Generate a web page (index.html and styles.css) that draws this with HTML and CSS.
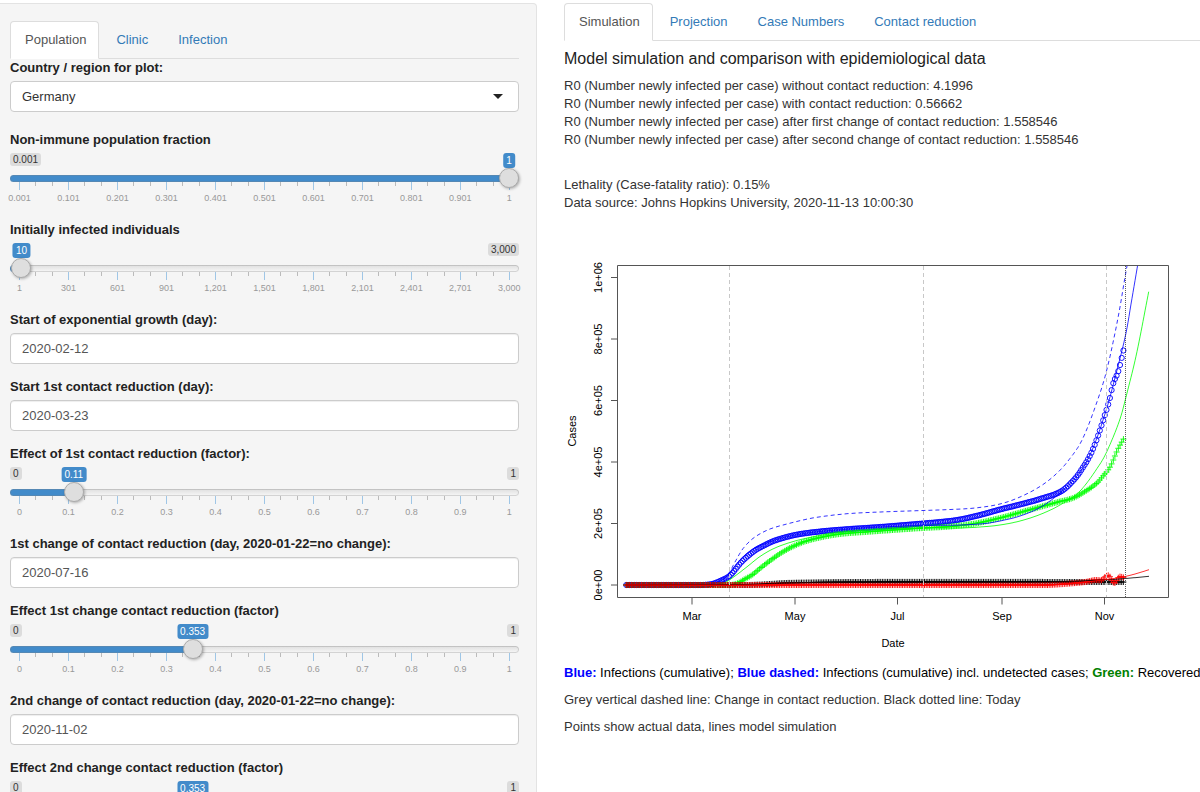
FILE: index.html
```html
<!DOCTYPE html>
<html lang="en">
<head>
<meta charset="utf-8">
<title>Epidemic simulation</title>
<link rel="stylesheet" href="styles.css">
</head>
<body>
<div class="layout">
  <form class="sidebar">
    <nav class="tabs">
      <a class="tab active" href="#population">Population</a>
      <a class="tab" href="#clinic">Clinic</a>
      <a class="tab" href="#infection">Infection</a>
    </nav>

    <div class="field field-select">
      <label for="country">Country / region for plot:</label>
      <div class="select-box">
        <select id="country"><option>Germany</option></select>
      </div>
    </div>

    <div class="field">
      <label for="fraction">Non-immune population fraction</label>
      <div class="slider" style="--pos: 1" data-ticks="0.001 0.101 0.201 0.301 0.401 0.501 0.601 0.701 0.801 0.901 1">
        <span class="limit min">0.001</span>
        <output class="bubble" for="fraction">1</output>
        <input type="range" id="fraction" min="0.001" max="1" step="0.001" value="1">
        <div class="scale"></div>
      </div>
    </div>

    <div class="field">
      <label for="initial">Initially infected individuals</label>
      <div class="slider" style="--pos: 0.003" data-ticks="1 301 601 901 1,201 1,501 1,801 2,101 2,401 2,701 3,000">
        <span class="limit max">3,000</span>
        <output class="bubble" for="initial">10</output>
        <input type="range" id="initial" min="1" max="3000" value="10">
        <div class="scale"></div>
      </div>
    </div>

    <div class="field">
      <label for="growth">Start of exponential growth (day):</label>
      <input type="text" class="text" id="growth" value="2020-02-12">
    </div>

    <div class="field">
      <label for="start1">Start 1st contact reduction (day):</label>
      <input type="text" class="text" id="start1" value="2020-03-23">
    </div>

    <div class="field">
      <label for="effect1">Effect of 1st contact reduction (factor):</label>
      <div class="slider" style="--pos: 0.11" data-ticks="0 0.1 0.2 0.3 0.4 0.5 0.6 0.7 0.8 0.9 1">
        <span class="limit min">0</span><span class="limit max">1</span>
        <output class="bubble" for="effect1">0.11</output>
        <input type="range" id="effect1" min="0" max="1" step="0.001" value="0.11">
        <div class="scale"></div>
      </div>
    </div>

    <div class="field">
      <label for="change1">1st change of contact reduction (day, 2020-01-22=no change):</label>
      <input type="text" class="text" id="change1" value="2020-07-16">
    </div>

    <div class="field">
      <label for="effect2">Effect 1st change contact reduction (factor)</label>
      <div class="slider" style="--pos: 0.353" data-ticks="0 0.1 0.2 0.3 0.4 0.5 0.6 0.7 0.8 0.9 1">
        <span class="limit min">0</span><span class="limit max">1</span>
        <output class="bubble" for="effect2">0.353</output>
        <input type="range" id="effect2" min="0" max="1" step="0.001" value="0.353">
        <div class="scale"></div>
      </div>
    </div>

    <div class="field">
      <label for="change2">2nd change of contact reduction (day, 2020-01-22=no change):</label>
      <input type="text" class="text" id="change2" value="2020-11-02">
    </div>

    <div class="field">
      <label for="effect3">Effect 2nd change contact reduction (factor)</label>
      <div class="slider" style="--pos: 0.353" data-ticks="0 0.1 0.2 0.3 0.4 0.5 0.6 0.7 0.8 0.9 1">
        <span class="limit min">0</span><span class="limit max">1</span>
        <output class="bubble" for="effect3">0.353</output>
        <input type="range" id="effect3" min="0" max="1" step="0.001" value="0.353">
        <div class="scale"></div>
      </div>
    </div>
  </form>

  <main class="main">
    <nav class="tabs">
      <a class="tab active" href="#simulation">Simulation</a>
      <a class="tab" href="#projection">Projection</a>
      <a class="tab" href="#cases">Case Numbers</a>
      <a class="tab" href="#contact">Contact reduction</a>
    </nav>
    <h4>Model simulation and comparison with epidemiological data</h4>
    <p>R0 (Number newly infected per case) without contact reduction: 4.1996<br>
    R0 (Number newly infected per case) with contact reduction: 0.56662<br>
    R0 (Number newly infected per case) after first change of contact reduction: 1.558546<br>
    R0 (Number newly infected per case) after second change of contact reduction: 1.558546<br><br></p>
    <p>Lethality (Case-fatality ratio): 0.15%<br>
    Data source: Johns Hopkins University, 2020-11-13 10:00:30</p>
    <svg class="chart" id="chart" viewBox="564 221 636 434" role="img" aria-label="Cases by date"></svg>
    <p class="legend"><b class="blue">Blue:</b> Infections (cumulative); <b class="blue">Blue dashed:</b> Infections (cumulative) incl. undetected cases; <b class="green">Green:</b> Recovered</p>
    <p>Grey vertical dashed line: Change in contact reduction. Black dotted line: Today</p>
    <p>Points show actual data, lines model simulation</p>
  </main>
</div>
<script src="script.js"></script>
</body>
</html>
```
FILE: styles.css
```css
* { box-sizing: border-box; }

body {
  margin: 0;
  height: 100vh;
  overflow: hidden;
  background: #fff;
  color: #333;
  font-family: "Liberation Sans", Arial, sans-serif;
  font-size: 13px;
  line-height: 18px;
}

.layout {
  display: flex;
  gap: 27px;
  padding-top: 3px;
}

.sidebar {
  flex: none;
  width: 44.75%;
  padding: 17px 17px 17px 10px;
  background: #f5f5f5;
  border: 1px solid #e3e3e3;
  border-left: 0;
  border-radius: 0 4px 4px 0;
}

.main {
  flex: 1;
  min-width: 0;
}

.tabs {
  display: flex;
  gap: 2px;
  border-bottom: 1px solid #ddd;
}

.tab {
  padding: 9px 12px 9px 14px;
  margin-bottom: -1px;
  border: 1px solid transparent;
  border-radius: 4px 4px 0 0;
  color: #337ab7;
  text-decoration: none;
}

.tab.active {
  color: #555;
  background: #fff;
  border-color: #ddd #ddd transparent;
}

.field { margin-bottom: 14px; }
.field-select { margin-bottom: 19px; }

label {
  display: block;
  margin-bottom: 4px;
  color: #222;
  font-weight: bold;
}

.text,
select {
  display: block;
  width: 100%;
  height: 31px;
  padding: 0 11px;
  border: 1px solid #ccc;
  border-radius: 4px;
  background: #fff;
  color: #555;
  font: inherit;
  appearance: none;
}

.text { box-shadow: inset 0 1px 1px rgba(0, 0, 0, 0.07); }

select { color: #333; }

.select-box { position: relative; }

.select-box::after {
  content: "";
  position: absolute;
  right: 16px;
  top: 13px;
  border: 5px solid transparent;
  border-top-color: #222;
  border-bottom: 0;
  pointer-events: none;
}

.slider {
  position: relative;
  height: 54px;
  padding-top: 15px;
}

.limit,
.bubble {
  position: absolute;
  top: 0;
  padding: 0 3px;
  border-radius: 3px;
  font-size: 10px;
}

.limit {
  line-height: 13px;
  background: #dcdcdc;
  color: #333;
}

.min { left: 0; }
.max { right: 0; }

.bubble {
  left: calc(10px + var(--pos) * (100% - 20px));
  transform: translateX(-50%);
  line-height: 15px;
  background: #428bca;
  color: #fff;
}

input[type="range"] {
  display: block;
  position: relative;
  z-index: 1;
  width: 100%;
  height: 20px;
  margin: 0;
  appearance: none;
  background: transparent;
}

input[type="range"]::-webkit-slider-runnable-track {
  height: 7px;
  border-radius: 4px;
  background:
    linear-gradient(#428bca, #428bca) 0 0 / calc(10px + var(--pos) * (100% - 20px)) 100% no-repeat,
    linear-gradient(#dedede, #f8f8f8);
  box-shadow: inset 0 0 0 1px rgba(130, 130, 130, 0.3);
}

input[type="range"]::-webkit-slider-thumb {
  appearance: none;
  width: 20px;
  height: 20px;
  margin-top: -7px;
  border: 1px solid #ababab;
  border-radius: 50%;
  background: #dedede;
  box-shadow: 1px 1px 3px rgba(0, 0, 0, 0.3);
}

.scale {
  display: flex;
  justify-content: space-between;
  height: 7px;
  margin: -6px 9px 0;
}

.tick {
  display: flex;
  justify-content: center;
  width: 1px;
  height: 4px;
  background: #bbb;
}

.tick.major {
  height: 8px;
  background: #9fc6e6;
}

.tick-label {
  margin-top: 12px;
  font-size: 9px;
  line-height: 9px;
  color: #999;
}

h4 {
  margin: 8px 0 9px;
  color: #222;
  font-size: 16px;
  line-height: 19px;
  font-weight: normal;
}

p { margin: 0 0 9px; }

.chart {
  display: block;
  width: 100%;
  margin-bottom: 9px;
  font-size: 11px;
}

.chart .axis { stroke: #555; fill: none; }
.chart .change { stroke: #c8c8c8; stroke-dasharray: 4 3; }
.chart .today { stroke: #333; stroke-dasharray: 1 1; stroke-opacity: 0.8; }
.chart .label { fill: #000; text-anchor: middle; }
.chart .curve { fill: none; stroke-opacity: 0.8; }
.chart .mark { fill: none; stroke-opacity: 0.9; }
.chart .dashed { stroke-dasharray: 4 3; }
.chart .c-blue { stroke: #00f; }
.chart .c-green { stroke: #0f0; }
.chart .c-black { stroke: #000; }
.chart .c-red { stroke: #f00; }

.legend {
  color: #000;
  white-space: nowrap;
}

.blue { color: #00f; }
.green { color: green; }
```
FILE: script.js
```js
// Slider scales: a labelled major tick, then two minor ones before the next.
document.querySelectorAll('.slider').forEach(function (slider) {
  var scale = slider.querySelector('.scale');
  slider.dataset.ticks.split(' ').forEach(function (text, i) {
    if (i > 0) scale.insertAdjacentHTML('beforeend', '<span class="tick"></span><span class="tick"></span>');
    scale.insertAdjacentHTML('beforeend', '<span class="tick major"><span class="tick-label">' + text + '</span></span>');
  });
});

// Smooth cubic interpolation through [x, y] knots, slopes from the neighbouring knots.
function interpolate(knots) {
  var n = knots.length, m = [];
  for (var i = 0; i < n; i++) {
    var a = knots[Math.max(i - 1, 0)], b = knots[Math.min(i + 1, n - 1)];
    m.push((b[1] - a[1]) / (b[0] - a[0]));
  }
  m[0] = 0;
  m[1] = 0;
  return function (x) {
    var k = 0;
    while (k < n - 2 && x > knots[k + 1][0]) k++;
    var h = knots[k + 1][0] - knots[k][0], t = (x - knots[k][0]) / h;
    var t2 = t * t, t3 = t2 * t;
    return (2 * t3 - 3 * t2 + 1) * knots[k][1] + (t3 - 2 * t2 + t) * h * m[k] +
      (3 * t2 - 2 * t3) * knots[k + 1][1] + (t3 - t2) * h * m[k + 1];
  };
}

var DAY = 1.685, FIRST = 626.3, LAST = 1123.6;
var parts = [];

function path(cls, d) { parts.push('<path class="' + cls + '" d="' + d + '"/>'); }

function curve(cls, knots) {
  var f = interpolate(knots), end = knots[knots.length - 1][0], d = '';
  for (var x = knots[0][0]; x < end; x += 1) d += (d ? 'L' : 'M') + x.toFixed(1) + ' ' + f(x).toFixed(1);
  path('curve ' + cls, d + 'L' + end + ' ' + f(end).toFixed(1));
}

function marks(cls, knots, shape) {
  var f = interpolate(knots), d = '';
  for (var x = FIRST; x <= LAST; x += DAY) {
    if (x >= knots[0][0]) d += 'M' + x.toFixed(1) + ' ' + f(x).toFixed(1) + shape;
  }
  path('mark ' + cls, d);
}

var CIRCLE = 'm-2.6 0a2.6 2.6 0 1 0 5.2 0a2.6 2.6 0 1 0 -5.2 0';
var PLUS = 'm-3 0h6m-3 -3v6';

// Frame and axes
path('axis', 'M617.5 265.5H1168.5V597.5H617.5Z');
[['Mar', 692], ['May', 795], ['Jul', 897.5], ['Sep', 1002], ['Nov', 1104.5]].forEach(function (t) {
  path('axis', 'M' + t[1] + ' 598v6.5');
  parts.push('<text class="label" x="' + t[1] + '" y="620">' + t[0] + '</text>');
});
[['0e+00', 585], ['2e+05', 523.5], ['4e+05', 462], ['6e+05', 400.5], ['8e+05', 339], ['1e+06', 277.5]].forEach(function (t) {
  path('axis', 'M611 ' + t[1] + 'h6.5');
  parts.push('<text class="label" transform="translate(602 ' + t[1] + ') rotate(-90)">' + t[0] + '</text>');
});
parts.push('<text class="label" x="893" y="647">Date</text>');
parts.push('<text class="label" transform="translate(576 431) rotate(-90)">Cases</text>');

// Reported cases
marks('c-blue', [[626, 585], [700, 585], [712, 584], [720, 581], [730, 575.5], [741, 562.5], [748, 556], [755, 550.5], [763, 546], [775, 540.5], [795, 535], [820, 531.5], [850, 529], [880, 527], [923, 523.5], [945, 521.5], [960, 519.5], [980, 515], [1000, 509.5], [1020, 504.5], [1040, 499], [1060, 492], [1070, 484], [1080, 472], [1093, 449], [1106.5, 410], [1110, 397.6], [1113, 384], [1117.7, 373], [1120, 365], [1123.5, 350]], CIRCLE);
marks('c-green', [[626, 585], [730, 585], [737, 583.5], [745, 579], [752, 575], [763, 566], [778, 555], [787, 549.5], [795, 545.5], [805, 541.5], [820, 537.5], [840, 534], [865, 532], [900, 529.5], [923, 528], [950, 526.5], [975, 523.5], [1000, 518], [1020, 512.5], [1040, 507], [1058, 502], [1073, 498], [1085, 491.5], [1097, 483], [1103, 476], [1110, 467], [1118, 449], [1124, 438]], PLUS);

// Model
curve('c-blue', [[626, 585], [700, 585], [715, 583], [722, 580], [729, 574], [737, 563.5], [745, 555], [754, 548.5], [763, 544.5], [775, 540], [795, 535], [820, 531.5], [850, 529], [880, 527], [923, 525.5], [960, 525], [985, 523.5], [1000, 521], [1020, 516], [1040, 507.5], [1060, 493], [1080, 472], [1093, 448], [1106.5, 409], [1117, 370], [1126, 333], [1131.7, 300], [1137.5, 266]]);
curve('c-blue dashed', [[626, 585], [700, 585], [715, 582.5], [722, 580], [729, 573], [735, 562], [742, 550], [750, 541], [758, 535], [770, 529], [785, 524.5], [810, 518.5], [830, 515.5], [850, 513.5], [880, 512], [923, 510.5], [950, 509.5], [975, 508], [1000, 504], [1020, 497], [1040, 486.5], [1055, 475], [1068, 461], [1083, 438], [1100.7, 391], [1108, 365], [1115, 333], [1120, 307], [1124, 283], [1127, 266]]);
curve('c-green', [[626, 585], [715, 585], [725, 582.5], [735, 576], [748, 566], [760, 556.5], [775, 548], [795, 541], [815, 536.5], [840, 532.5], [870, 530], [923, 528], [960, 528], [980, 527], [1000, 525], [1020, 521], [1040, 514.5], [1060, 505], [1080, 491], [1100, 464], [1108, 449], [1120, 419], [1127, 393], [1136.7, 353], [1148.7, 291.7]]);

// Deaths and critical cases
marks('c-black', [[626, 585], [745, 585], [770, 584], [785, 583], [855, 582], [1124, 582]], PLUS);
marks('c-red', [[626, 585], [1045, 585], [1070, 583.5], [1085, 582], [1095, 580], [1102, 580], [1105, 577], [1109, 575.5], [1112, 581], [1115, 583], [1119, 577], [1124, 577.5]], PLUS);
curve('c-black', [[626, 585], [740, 584.5], [780, 583], [850, 582.5], [1040, 582], [1090, 580.5], [1125, 578.5], [1149, 576.3]]);
curve('c-red', [[626, 585], [1040, 585], [1070, 584], [1095, 581], [1120, 577.5], [1135, 574], [1149, 569.7]]);

// Contact reduction dates and today
[729.5, 923.5, 1106.5].forEach(function (x) { path('change', 'M' + x + ' 266V597'); });
path('today', 'M1125.5 266V597');

document.getElementById('chart').innerHTML = parts.join('');
```
